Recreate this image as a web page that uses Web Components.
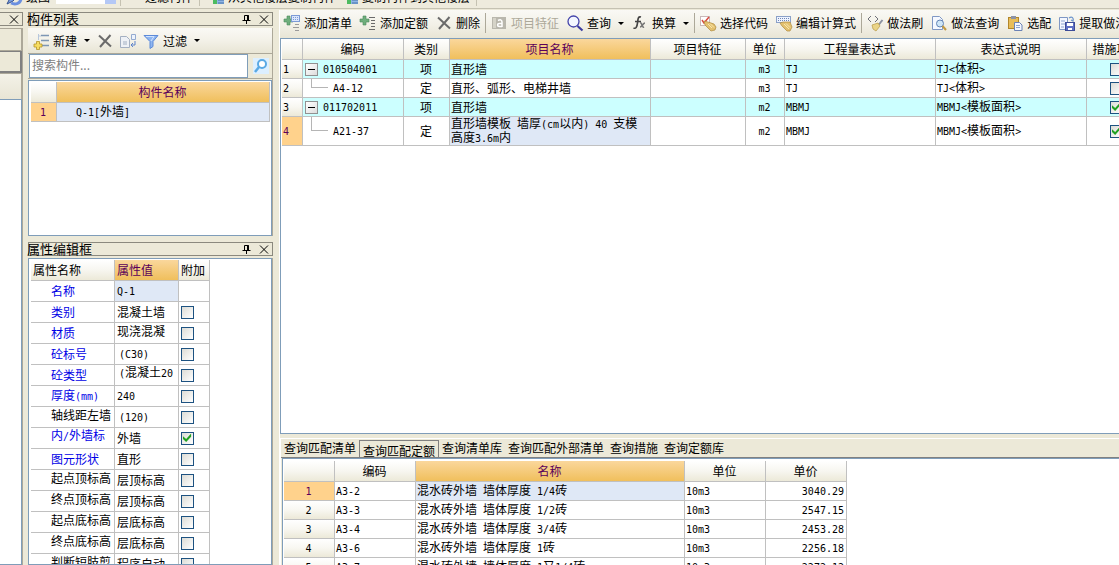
<!DOCTYPE html>
<html lang="zh-CN">
<head>
<meta charset="utf-8">
<title>构件定义</title>
<style>
html,body{height:100%;margin:0}
body{font:12px/16px "Noto Sans CJK SC","Liberation Sans",sans-serif;color:#000;background:#ece9d8;overflow:hidden}
</style>
</head>
<body>
<cost-app></cost-app>
<script>
const ICONS = {
  pencil:'<path d="M1 15l3-6 8-8 3 3-8 8z" fill="#7d9ee0" stroke="#34528f"/><path d="M5 14c4 2 9 1 10-4" fill="none" stroke="#6b8fe0" stroke-width="3"/>',
  copy:'<path d="M1 7h4V3h4v4h4v4H9v4H5v-4H1z" fill="#4dbb60"/><path d="M9 6h7v9H9z" fill="#8fb5e6"/><path d="M10 8h6M10 11h6M10 14h6" stroke="#4472a8"/>',
  addlist:'<path d="M0 4h3V1h3v3h3v3H6v3H3V7H0z" fill="#6fae7c" stroke="#4c8c5c" stroke-width=".6"/><rect x="7.500" y=".5" width="8" height="6" fill="#dbe6fb" stroke="#7c9ad6"/><path d="M9 2.500h6M9 4.500h6" stroke="#7c9ad6" stroke-dasharray="1 1"/><path d="M11 9.500h4M9 12.500h6M11 15.500h4" stroke="#9a9a9a"/>',
  addquota:'<path d="M0 4h3V1h3v3h3v3H6v3H3V7H0z" fill="#6fae7c" stroke="#4c8c5c" stroke-width=".6"/><path d="M9 2.500h6M11 5.500h4M11 8.500h4M11 11.500h4M9 14.500h6" stroke="#6a6a6a"/>',
  del:'<path d="M2 2.500l12 11M13.500 2L3 14" fill="none" stroke="#6b6b6b" stroke-width="2"/>',
  feature:'<rect x="1" y="2" width="14" height="12" fill="#b9b7ad"/><rect x="2" y="3" width="3" height="10" fill="#d5d3c8"/><path d="M7 5.500c2-1 4-1 4 1.500v5M11 8.500H8.500c-2.500 0-2.500 3 0 3H11" fill="none" stroke="#fff" stroke-width="1.500"/>',
  search:'<circle cx="6.500" cy="6.500" r="5.500" fill="#f4f7ff" stroke="#4444aa" stroke-width="1.300"/><path d="M10.500 11l5 4.500" stroke="#3c3ca0" stroke-width="2.200"/>',
  fx:'<path d="M9 2C6 1 6 4 5.500 8S4 14 1.500 13M3 6.500h6" fill="none" stroke="#444" stroke-width="1.700"/><path d="M8 8c2-1 2 5 4 4M13 8c-2 0-3 4-5 4" fill="none" stroke="#777" stroke-width="1.600"/>',
  code:'<rect x=".5" y="1.500" width="9" height="9" fill="#fff" stroke="#c9b7b7"/><path d="M2 5l2 3 5-6" fill="none" stroke="#d94a3e" stroke-width="1.500"/><path d="M4 6l4 1 6 2 2 3-1 3-4 1-6-6z" fill="#e3c06f" stroke="#b08b3c" stroke-width=".7"/><path d="M8 9l4 4M10 8.500l4 4" stroke="#fff1bd" stroke-width=".8"/>',
  formula:'<rect x=".5" y="1.500" width="14" height="6" fill="#eef3ff" stroke="#8aa0c8"/><path d="M2 3.500h12M2 5.500h12" stroke="#6f87b5" stroke-dasharray="1 1"/><path d="M4 8l3-1 7 0 2 5-2 4-3 0-5-5z" fill="#e3c06f" stroke="#b08b3c" stroke-width=".7"/><path d="M8 9l5 5M10 8.500l4 4" stroke="#fff1bd" stroke-width=".8"/>',
  brush:'<path d="M4 1L1 4l3 3M8 1l3 3-3 3" fill="none" stroke="#6f7078"/><path d="M15.500 5l-4 5" stroke="#8b91a0" stroke-width="2"/><path d="M5 10l6-2 2 3-4 5-3-2z" fill="#ead487" stroke="#b79a45" stroke-width=".7"/>',
  docsearch:'<path d="M1.500 1.500h7l3 3v10h-10z" fill="#f5f8ff" stroke="#7f97c4"/><circle cx="9" cy="8.500" r="3.500" fill="#cfe6f7" stroke="#6283b5"/><path d="M11.500 11l3.500 4" stroke="#c39a42" stroke-width="2"/>',
  paste:'<rect x="1.500" y="2.500" width="10" height="11" fill="#e8bd5a" stroke="#b28629"/><path d="M4 1h5v3H4z" fill="#8d93a5"/><path d="M7.500 7.500h5l2.500 2.500v5.500H7.500z" fill="#f4f7ff" stroke="#6b82b5"/><path d="M9 10.500h4M9 12.500h4" stroke="#8ea4cf"/>',
  extract:'<path d="M.5 2.500h8v12h-8z" fill="#f4f7ff" stroke="#7f97c4"/><path d="M2 6h4M2 9h4M2 12h3" stroke="#8ea4cf"/><rect x="6.500" y="7.500" width="9" height="8" fill="#5f70c4" stroke="#3d4c98"/><path d="M8 8h6v3H8zM9 13h4v2H9z" fill="#fff"/><path d="M10 3c3-2 5 0 4 3l-2-1" fill="none" stroke="#6c94cc" stroke-width="1.300"/>',
  create:'<path d="M8 2.500h8M8 7.500h8M8 12.500h8" stroke="#7d96b4" stroke-width="1.400"/><path d="M5.500 1v6M5 3h3" stroke="#b7c7dc"/><path d="M1 11h2.500V8.500h3V11H9v3H6.500v2.500h-3V14H1z" fill="#f7dd62" stroke="#b5942a" stroke-width=".8"/>',
  sync:'<path d="M.5 3.500h6l3 3v8h-9z" fill="#eef1f6" stroke="#a4b0c2"/><rect x="3" y="8" width="4" height="4" fill="#c8d0dc"/><path d="M11.500 1.500h4v5h-4z" fill="#eef3fc" stroke="#94abd0"/><path d="M15 8v4h-4M13 10l-2 2 2 2" fill="none" stroke="#5d83cb"/>',
  funnel:'<path d="M1 2.500h14L10 8.500v5l-3 2v-7z" fill="#8fb6f0" stroke="#5c8ad8"/><path d="M3 3.500h8L8 8" fill="none" stroke="#d2e4ff"/>',
  find:'<rect width="16" height="16" fill="#dcefff"/><circle cx="9" cy="6" r="4" fill="#fff" stroke="#5aa9e4" stroke-width="2"/><path d="M6 9l-4 5" stroke="#5aa9e4" stroke-width="2.500"/>',
  pin:'<path d="M6.500 9V4.500h4V9M4.500 9.500h8M8.500 10v3" fill="none" stroke="#000"/><path d="M10 4.500V9" stroke="#000" stroke-width="2"/>',
  close:'<path d="M4 4.500l8 8M12 4.500l-8 8" stroke="#000"/>'
};

/* Latin runs use a half-width monospaced face so columns of codes line up. */
const esc = s => s.replace(/&/g,'&amp;').replace(/</g,'&lt;');
const mix = s => s.replace(/[ -~]+|[^ -~]+/g, r => /[ -~]/.test(r[0]) ? `<span class="l">${esc(r)}</span>` : r);

class UiIcon extends HTMLElement {
  connectedCallback(){
    const r = this.attachShadow({mode:'open'});
    r.innerHTML = `<style>:host{display:block;flex:none;width:16px;height:16px}svg{display:block;overflow:visible}</style>
      <svg width="16" height="16" viewBox="0 0 16 16" aria-hidden="true">${ICONS[this.getAttribute('name')]||''}</svg>`;
  }
}
customElements.define('ui-icon', UiIcon);

class ToolButton extends HTMLElement {
  connectedCallback(){
    const r = this.attachShadow({mode:'open'});
    const icon = this.getAttribute('icon');
    r.innerHTML = `<style>
      :host{display:block;flex:none}
      button{display:flex;align-items:center;gap:4px;border:0;padding:0;background:none;font:inherit;color:inherit;white-space:nowrap}
      button:disabled{color:#aca899}
      i{width:0;border:3px solid transparent;border-top-color:currentColor;border-bottom:0;margin-left:3px}
      </style><button ${this.hasAttribute('disabled')?'disabled':''} ${this.title?`aria-label="${this.title}"`:''}>${icon?`<ui-icon name="${icon}"></ui-icon>`:''}<slot></slot>${this.hasAttribute('menu')?'<i></i>':''}</button>`;
  }
}
customElements.define('tool-button', ToolButton);

class ToolBar extends HTMLElement {
  connectedCallback(){
    this.attachShadow({mode:'open'}).innerHTML = `<style>
      :host{display:flex;align-items:center;gap:8px;box-sizing:border-box;overflow:hidden;flex:none;background:linear-gradient(#faf9f5,#f3f1e8 50%,#e8e5d5)}
      ::slotted(hr){flex:none;width:1px;height:20px;border:0;margin:0 -3px;background:#aca899}
      </style><slot></slot>`;
  }
}
customElements.define('tool-bar', ToolBar);

class DockPanel extends HTMLElement {
  connectedCallback(){
    this.attachShadow({mode:'open'}).innerHTML = `<style>
      :host{display:flex;flex-direction:column;min-height:0}
      header{display:flex;align-items:center;height:14px;box-sizing:border-box;border:1px solid #8b897e;flex:none;margin-bottom:2px}
      :host(:not([heading])) header{border-left:0}
      h2{font:inherit;margin:0 auto 0 0;white-space:nowrap}
      :host([heading]) h2{font-size:13px;margin-left:-2px}
      button{border:0;padding:0;background:none;margin-left:2px;height:16px}
      section{display:flex;flex-direction:column;flex:1;min-height:0;border-right:1px solid #aca899}
      </style><header><h2>${this.getAttribute('heading')||''}</h2>
      ${this.hasAttribute('pin')?'<button aria-label="固定"><ui-icon name="pin"></ui-icon></button>':''}
      <button aria-label="关闭"><ui-icon name="close"></ui-icon></button></header><section><slot></slot></section>`;
  }
}
customElements.define('dock-panel', DockPanel);

const GRID_CSS = `
  :host{display:block;box-sizing:border-box;background:#fff;border:1px solid #7f9db9;padding:1px;overflow:hidden;min-height:0}
  table{table-layout:fixed;border-collapse:separate;border-spacing:0}
  th,td{box-sizing:border-box;padding:0 2px 0 1px;border-right:1px solid #c0c0c0;border-bottom:1px solid #c0c0c0;height:var(--row,19px);font-weight:normal;text-align:left;white-space:nowrap;overflow:hidden;line-height:12px}
  thead th{height:var(--head,21px);background:linear-gradient(#fff,#f7f6f0 50%,#ece9d8);text-align:center}
  thead th.on{background:linear-gradient(#fad79c,#f0bf5c);color:#5a005a}
  tbody th{background:linear-gradient(#fff,#f8f7f1 50%,#ece9d8);text-align:center}
  th.rowon{background:#ffd28c;color:#5a005a}
  td.on{background:#dfe8f6}
  .l{font:10px/12px "DejaVu Sans Mono",monospace}
  .c{text-align:center}.r{text-align:right}
  input{appearance:none;display:block;box-sizing:border-box;width:13px;height:13px;margin:0;border:1px solid #1d5281;background:linear-gradient(135deg,#dcdcd6,#fff)}
  input:checked::before{content:"";display:block;width:9px;height:9px;margin:1px;background:#21a121;clip-path:polygon(0 30%,35% 60%,90% 0,90% 35%,35% 95%,0 60%)}
`;

class BillGrid extends HTMLElement {
  connectedCallback(){
    const heads = ['','编码','类别','项目名称','项目特征','单位','工程量表达式','表达式说明','措施项目'];
    const widths = [21,101,46,201,95,39,151,151,61];
    const rows = [
      ['010504001','项','直形墙','m3','TJ','TJ<体积>',0,1],
      ['A4-12','定','直形、弧形、电梯井墙','m3','TJ','TJ<体积>',0,0],
      ['011702011','项','直形墙','m2','MBMJ','MBMJ<模板面积>',1,1],
      ['A21-37','定','直形墙模板 墙厚(cm以内) 40 支模\n高度3.6m内','m2','MBMJ','MBMJ<模板面积>',1,0]];
    this.attachShadow({mode:'open'}).innerHTML = `<style>${GRID_CSS}
      :host{padding-top:0}
      table{width:866px}
      tbody th{text-align:left}
      td.name{white-space:pre}
      tr.item td{background:#ccffff}
      tr.tall{--row:29px}
      .tree{display:flex;align-items:center;gap:5px;height:calc(var(--row,19px) - 1px);padding-left:1px}
      .tree button{width:13px;height:13px;box-sizing:border-box;border:1px solid #919191;background:linear-gradient(135deg,#fff,#ddd);padding:0 2px}
      .tree button::before{content:"";display:block;height:1px;background:#000}
      .tree i{align-self:flex-start;width:17px;height:50%;box-sizing:border-box;margin-left:6px;border:1px solid #b5b5b5;border-width:0 0 1px 1px}
      .tree .l{padding-top:1px}
      input{margin:0 auto}
      </style><table><colgroup>${widths.map(w=>`<col style="width:${w}px">`).join('')}</colgroup>
      <thead><tr>${heads.map((h,i)=>`<th${i==3?' class="on"':''}>${h}</th>`).join('')}</tr></thead>
      <tbody>${rows.map((r,i)=>`<tr class="${r[7]?'item':''} ${i==3?'tall':''}">
        <th class="${i==3?'rowon':''}"><span class="l">${i+1}</span></th>
        <td><div class="tree">${r[7]?'<button aria-label="折叠"></button>':'<i></i>'}${mix(r[0])}</div></td>
        <td class="c">${r[1]}</td><td class="name ${i==3?'on':''}">${r[2].split('\n').map(mix).join('\n')}</td><td></td>
        <td class="c">${mix(r[3])}</td><td>${mix(r[4])}</td><td>${mix(r[5])}</td>
        <td><input type="checkbox" aria-label="措施项目 ${i+1}" ${r[6]?'checked':''}></td></tr>`).join('')}</tbody></table>`;
  }
}
customElements.define('bill-grid', BillGrid);

class QuotaGrid extends HTMLElement {
  connectedCallback(){
    const rows = [['A3-2','混水砖外墙 墙体厚度 1/4砖','3040.29'],['A3-3','混水砖外墙 墙体厚度 1/2砖','2547.15'],
      ['A3-4','混水砖外墙 墙体厚度 3/4砖','2453.28'],['A3-6','混水砖外墙 墙体厚度 1砖','2256.18'],['A3-7','混水砖外墙 墙体厚度 1又1/4砖','2272.12']];
    this.attachShadow({mode:'open'}).innerHTML = `<style>${GRID_CSS}
      :host{padding-top:2px}
      table{width:563px}</style><table><colgroup>${[51,81,269,81,81].map(w=>`<col style="width:${w}px">`).join('')}</colgroup>
      <thead><tr><th></th><th>编码</th><th class="on">名称</th><th>单位</th><th>单价</th></tr></thead>
      <tbody>${rows.map((r,i)=>`<tr><th class="${i?'':'rowon'}"><span class="l">${i+1}</span></th><td>${mix(r[0])}</td>
      <td class="${i?'':'on'}">${mix(r[1])}</td><td>${mix('10m3')}</td><td class="r">${mix(r[2])}</td></tr>`).join('')}</tbody></table>`;
  }
}
customElements.define('quota-grid', QuotaGrid);

class ComponentGrid extends HTMLElement {
  connectedCallback(){
    this.attachShadow({mode:'open'}).innerHTML = `<style>${GRID_CSS}
      :host{padding-left:2px}
      table{width:100%}td{padding-left:19px}</style>
      <table><colgroup><col style="width:26px"><col></colgroup><thead><tr><th></th><th class="on">构件名称</th></tr></thead>
      <tbody><tr><th class="rowon"><span class="l">1</span></th><td class="on">${mix('Q-1[外墙]')}</td></tr></tbody></table>`;
  }
}
customElements.define('component-grid', ComponentGrid);

class PropertyGrid extends HTMLElement {
  connectedCallback(){
    const rows = [['名称','Q-1',1],['类别','混凝土墙',1],['材质','现浇混凝',1,'v'],['砼标号','(C30)',1],['砼类型','(混凝土20',1,'v'],
      ['厚度(mm)','240',1],['轴线距左墙','(120)',0,'n'],['内/外墙标','外墙',1,'n'],['图元形状','直形',1],['起点顶标高','层顶标高',0,'n'],
      ['终点顶标高','层顶标高',0,'n'],['起点底标高','层底标高',0,'n'],['终点底标高','层底标高',0,'n'],['判断短肢剪','程序自动',0,'n']];
    this.attachShadow({mode:'open'}).innerHTML = `<style>${GRID_CSS}
      :host{padding-left:2px}
      table{width:179px;--row:21px}
      th,td{padding-left:2px;padding-right:0}
      thead th{text-align:left}
      td:first-child{padding-left:20px}
      td.blue{color:#0000e6}
      td.wrap{padding-bottom:4px}
      td .wide{padding-left:2px}
      </style><table><colgroup><col style="width:84px"><col style="width:64px"><col style="width:31px"></colgroup>
      <thead><tr><th>属性名称</th><th class="on">属性值</th><th>附加</th></tr></thead>
      <tbody>${rows.map((r,i)=>`<tr><td class="${r[2]?'blue':''} ${r[3]=='n'?'wrap':''}">${mix(r[0])}</td>
      <td class="${i?'':'on'} ${r[3]=='v'?'wrap':''}">${r[1][0]=='('?`<span class="wide">${mix(r[1])}</span>`:mix(r[1])}</td>
      <td>${i?`<input type="checkbox" aria-label="附加 ${r[0]}" ${i==7?'checked':''}>`:''}</td></tr>`).join('')}</tbody></table>`;
  }
}
customElements.define('property-grid', PropertyGrid);

class SearchBox extends HTMLElement {
  connectedCallback(){
    this.attachShadow({mode:'open'}).innerHTML = `<style>
      :host{display:flex;align-items:center;height:26px;box-sizing:border-box;border-top:1px solid #aca899;border-bottom:1px solid #aca899;flex:none}
      input{flex:1;min-width:0;height:24px;box-sizing:border-box;border:1px solid #7f9db9;background:#fff;padding:0 2px 4px;margin-left:1px;font:inherit}
      input::placeholder{color:#808080;opacity:1}
      button{border:0;background:none;padding:0 3px 0 5px}
      </style><input type="text" aria-label="搜索构件" placeholder="搜索构件..."><button aria-label="搜索"><ui-icon name="find"></ui-icon></button>`;
  }
}
customElements.define('search-box', SearchBox);

class QueryTabs extends HTMLElement {
  connectedCallback(){
    const tabs = ['查询匹配清单','查询匹配定额','查询清单库','查询匹配外部清单','查询措施','查询定额库'];
    this.attachShadow({mode:'open'}).innerHTML = `<style>
      :host{display:flex;height:20px;flex:none;border-top:1px solid #fff;border-bottom:1px solid #808080;box-sizing:border-box}
      button{flex:none;font:inherit;color:inherit;border:0;background:none;padding:0 3px}
      button.on{border:1px solid #808080;border-bottom:0;padding:2px 3px 0;margin-top:1px}
      </style>${tabs.map((t,i)=>`<button role="tab" aria-selected="${i==1}" class="${i==1?'on':''}">${t}</button>`).join('')}`;
  }
}
customElements.define('query-tabs', QueryTabs);

class CostApp extends HTMLElement {
  connectedCallback(){
    this.attachShadow({mode:'open'}).innerHTML = `<style>
      :host{display:flex;flex-direction:column;height:100vh;overflow:hidden}
      .top{display:flex;align-items:flex-end;height:8px;overflow:hidden;border-bottom:1px solid #c5c2b2;flex:none;padding-left:6px;background:#eeebdd}
      .top>*{flex:none;margin-bottom:3px}
      .top select{width:60px;height:16px;margin:0 4px 4px 0;border:0;border-right:11px solid #b4c8f6;background:#fff;appearance:none}
      .top hr{width:1px;height:8px;border:0;margin:0 8px 2px 0;background:#c5c2b2}
      .top tool-button{margin-right:6px}
      .top .filter{margin-left:16px}
      .work{display:flex;flex:1;min-height:0}
      .edge{width:23px;flex:none;margin:3px 5px 0 0}
      .edge div{box-sizing:border-box;flex:none;border:1px solid #aca899;border-left:0}
      .edge .a{height:23px}.edge .b{height:22px;border-color:#808080;border-width:1px 2px 2px 0}.edge .c{height:26px;border-bottom:0;background:linear-gradient(#f4f2e8,#e8e5d5)}
      .edge .d{flex:1;background:#fff;border-color:#7f9db9}
      .dock{display:flex;flex-direction:column;width:245px;flex:none;margin:3px 6px 0 0}
      .list{height:224px;flex:none;margin-bottom:6px}
      .props{flex:1}
      .dock tool-bar{height:25px;padding:0 5px;gap:7px}
      component-grid,property-grid{flex:1}
      component-grid{margin-top:1px}
      .main{display:flex;flex-direction:column;flex:1;min-width:0;margin-top:1px;border-left:1px solid #fff}
      .main tool-bar{height:28px;padding:0 0 2px 4px}
      .main bill-grid{flex:1;border-right:0}
      .query{display:flex;flex-direction:column;height:127px;flex:none;margin-top:4px;border-left:1px solid #fff}
      .query quota-grid{flex:1;border-right:0;border-bottom:0;margin-left:1px}
      </style>
      <nav class="top"><tool-button icon="pencil">绘图</tool-button><select aria-label="楼层"></select><hr>
        <tool-button class="filter">过滤构件</tool-button><hr>
        <tool-button icon="copy">从其他楼层复制构件</tool-button><tool-button icon="copy">复制构件到其他楼层</tool-button><hr></nav>
      <div class="work">
        <dock-panel class="edge"><div class="a"></div><div class="b"></div><div class="c"></div><div class="d"></div></dock-panel>
        <div class="dock">
          <dock-panel class="list" heading="构件列表" pin>
            <tool-bar><tool-button icon="create" menu>新建</tool-button><tool-button icon="del" title="删除"></tool-button><tool-button icon="sync" title="复制"></tool-button><tool-button icon="funnel" menu>过滤</tool-button></tool-bar>
            <search-box></search-box><component-grid></component-grid>
          </dock-panel>
          <dock-panel class="props" heading="属性编辑框" pin><property-grid></property-grid></dock-panel>
        </div>
        <div class="main">
          <tool-bar>
            <tool-button icon="addlist">添加清单</tool-button><tool-button icon="addquota">添加定额</tool-button><tool-button icon="del">删除</tool-button><hr>
            <tool-button icon="feature" disabled>项目特征</tool-button><tool-button icon="search" menu>查询</tool-button><tool-button icon="fx" menu>换算</tool-button><hr>
            <tool-button icon="code">选择代码</tool-button><tool-button icon="formula">编辑计算式</tool-button><hr>
            <tool-button icon="brush">做法刷</tool-button><tool-button icon="docsearch">做法查询</tool-button><tool-button icon="paste">选配</tool-button><tool-button icon="extract">提取做法</tool-button>
          </tool-bar>
          <bill-grid></bill-grid>
          <div class="query"><query-tabs></query-tabs><quota-grid></quota-grid></div>
        </div>
      </div>`;
  }
}
customElements.define('cost-app', CostApp);
</script>
</body>
</html>
